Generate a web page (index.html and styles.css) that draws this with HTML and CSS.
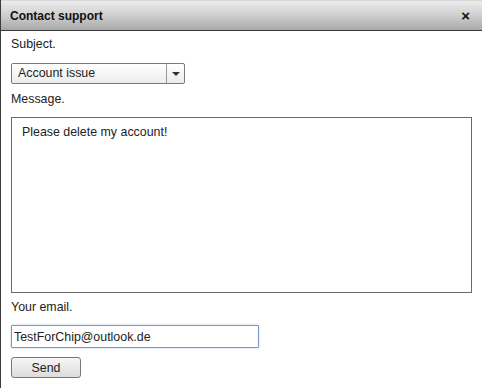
FILE: index.html
```html
<!DOCTYPE html>
<html lang="en">

<head>
    <meta charset="UTF-8">
    <meta name="viewport" content="width=device-width, initial-scale=1.0">
    <title>Contact support</title>
    <link rel="stylesheet" href="styles.css">
</head>

<body>
    <div class="dialog">
        <div class="dialog-header">
            <span class="dialog-title">Contact support</span>
            <span class="dialog-close">&times;</span>
        </div>

        <div class="dialog-body">
            <label class="field-label subject-label">Subject.</label>
            <div class="select-box">
                <span class="select-value">Account issue</span>
                <span class="select-arrow"></span>
            </div>

            <label class="field-label message-label" for="messageInput">Message.</label>
            <textarea id="messageInput" class="message-input">Please delete my account!</textarea>

            <label class="field-label email-label" for="emailInput">Your email.</label>
            <input type="text" id="emailInput" class="email-input" value="TestForChip@outlook.de">

            <button class="send-button">Send</button>
        </div>
    </div>
</body>

</html>
```

FILE: styles.css
```css
body {
    margin: 0;
    font-family: "Liberation Sans", Arial, sans-serif;
    font-size: 12.4px;
    color: #222;
    background-color: #fff;
}

.dialog {
    height: 388px;
    border-left: 1px solid #3c3c3c;
    box-sizing: border-box;
}

.dialog-header {
    height: 31px;
    box-sizing: border-box;
    display: flex;
    align-items: center;
    justify-content: space-between;
    padding: 0 12px 0 9px;
    border-top: 1px solid #d8d8d8;
    border-bottom: 1px solid #3a3a3a;
    background: linear-gradient(to bottom, #ececec 0%, #d2d2d2 45%, #a8a8a8 100%);
}

.dialog-title {
    font-weight: bold;
    font-size: 12px;
    color: #111;
}

.dialog-close {
    font-weight: bold;
    font-size: 15px;
    line-height: 14px;
    color: #111;
}

.dialog-body {
    padding: 6px 10px 0 10px;
}

.field-label {
    display: block;
    line-height: 14px;
}

.subject-label {
    margin-bottom: 12px;
}

.select-box {
    width: 174px;
    height: 21px;
    box-sizing: border-box;
    display: flex;
    border: 1px solid #7a7a7a;
    border-radius: 2px;
    background: linear-gradient(to bottom, #ffffff, #ececec);
    margin-bottom: 8px;
}

.select-value {
    flex: 1;
    padding-left: 6px;
    line-height: 19px;
}

.select-arrow {
    width: 17px;
    border-left: 1px solid #9a9a9a;
    position: relative;
}

/* small down triangle */
.select-arrow::after {
    content: "";
    position: absolute;
    left: 5px;
    top: 8px;
    border-left: 4px solid transparent;
    border-right: 4px solid transparent;
    border-top: 4px solid #333;
}

.message-label {
    margin-bottom: 11px;
}

.message-input {
    display: block;
    width: 461px;
    height: 176px;
    box-sizing: border-box;
    margin: 0 0 7px 0;
    padding: 7px 10px;
    border: 1px solid #6a6a6a;
    font-family: "Liberation Sans", Arial, sans-serif;
    font-size: 12.4px;
    color: #222;
    resize: none;
    outline: none;
}

.email-label {
    margin-bottom: 11px;
}

.email-input {
    display: block;
    width: 248px;
    height: 23px;
    box-sizing: border-box;
    margin: 0 0 9px 0;
    padding: 0 2px;
    border: 1px solid #7898c6;
    border-radius: 1px;
    box-shadow: 0 0 2px #a9c6ea;
    font-family: "Liberation Sans", Arial, sans-serif;
    font-size: 12.4px;
    color: #222;
    outline: none;
}

.send-button {
    display: block;
    width: 70px;
    height: 21px;
    padding: 0;
    border: 1px solid #777;
    border-radius: 3px;
    background: linear-gradient(to bottom, #f6f6f6, #dcdcdc);
    font-family: "Liberation Sans", Arial, sans-serif;
    font-size: 12.4px;
    color: #222;
}
```
